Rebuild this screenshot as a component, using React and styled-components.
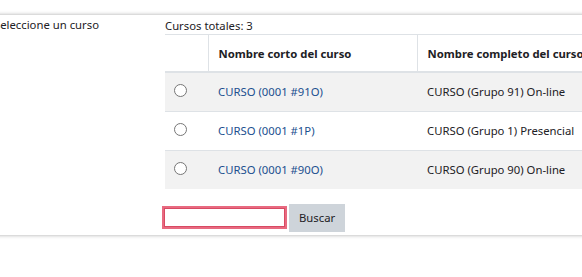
import React from "react";
import styled, { createGlobalStyle } from "styled-components";

const GlobalStyle = createGlobalStyle`
  html, body {
    margin: 0;
    padding: 0;
    background: #ffffff;
    overflow: hidden;
  }
  body {
    font-family: "Noto Sans", "Open Sans", sans-serif;
    font-size: 11.3px;
    color: #1d2125;
  }
`;

const Page = styled.div`
  width: 582px;
  height: 277px;
  overflow: hidden;
  padding-top: 15px;
  box-sizing: border-box;
`;

const Panel = styled.div`
  width: 780px;
  margin-left: -16px;
  background: #fff;
  box-shadow: 0 0 4px rgba(0, 0, 0, 0.35);
  display: grid;
  grid-template-columns: 181px 1fr;
  padding: 2px 0 3px;
`;

const Label = styled.div`
  padding-left: 10px;
  line-height: 16px;
  color: #1d2125;
`;

const Content = styled.div`
  display: flex;
  flex-direction: column;
`;

const Total = styled.div`
  line-height: 17px;
`;

const Table = styled.table`
  width: 100%;
  border-collapse: collapse;
  border-top: 1px solid #dee2e6;
`;

const HeadCell = styled.th`
  height: 37px;
  padding: 1px 10px 0;
  text-align: left;
  font-weight: 700;
  white-space: nowrap;
  border-bottom: 2px solid #dee2e6;
  border-left: ${p => (p.$first ? "none" : "1px solid #dee2e6")};
  width: ${p => p.$w || "auto"};
  box-sizing: border-box;
`;

const Row = styled.tr`
  background: ${p => (p.$striped ? "#f2f2f2" : "#ffffff")};
  border-top: 1px solid #dee2e6;
`;

const Cell = styled.td`
  height: 38px;
  padding: 0 10px;
  white-space: nowrap;
  vertical-align: middle;
`;

const RadioCell = styled.td`
  padding: 0 0 0 9px;
  text-align: left;
  vertical-align: middle;
`;

const Radio = styled.span`
  display: inline-block;
  width: 11px;
  height: 11px;
  border: 1px solid #767676;
  border-radius: 50%;
  background: #fff;
  margin-top: -4px;
  vertical-align: middle;
`;

const Link = styled.a`
  color: #1b4f8f;
  text-decoration: none;
`;

const SearchBar = styled.div`
  display: flex;
  align-items: center;
  gap: 2px;
  margin-top: 15px;
`;

const SearchInput = styled.input`
  width: 115px;
  height: 17px;
  box-sizing: content-box;
  margin: 0 2px 0 -1px;
  padding: 0 2px;
  border: 1px solid #d84a63;
  box-shadow: 0 0 0 2px #e86a80;
  outline: none;
  font: inherit;
`;

const Button = styled.button`
  height: 28px;
  padding: 0 10px;
  border: none;
  background: #ced4da;
  color: #1d2125;
  font: inherit;
`;

const courses = [
  { short: "CURSO (0001 #91O)", full: "CURSO (Grupo 91) On-line" },
  { short: "CURSO (0001 #1P)", full: "CURSO (Grupo 1) Presencial" },
  { short: "CURSO (0001 #90O)", full: "CURSO (Grupo 90) On-line" }
];

const App = () => (
  <Page>
    <GlobalStyle />
    <Panel>
      <Label>Seleccione un curso</Label>
      <Content>
        <Total>Cursos totales: 3</Total>
        <Table>
          <thead>
            <tr>
              <HeadCell $first $w="43px" />
              <HeadCell $w="209px">Nombre corto del curso</HeadCell>
              <HeadCell>Nombre completo del curso</HeadCell>
            </tr>
          </thead>
          <tbody>
            {courses.map((c, i) => (
              <Row key={c.short} $striped={i % 2 === 0}>
                <RadioCell>
                  <Radio />
                </RadioCell>
                <Cell>
                  <Link href="#">{c.short}</Link>
                </Cell>
                <Cell>{c.full}</Cell>
              </Row>
            ))}
          </tbody>
        </Table>
        <SearchBar>
          <SearchInput type="text" />
          <Button>Buscar</Button>
        </SearchBar>
      </Content>
    </Panel>
  </Page>
);

export default App;
